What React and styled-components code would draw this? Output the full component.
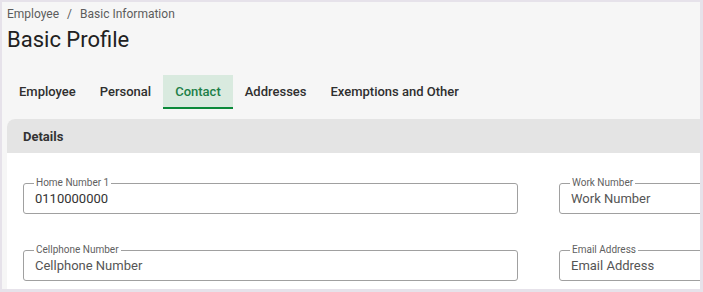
import React, { useState } from "react";
import styled, { createGlobalStyle } from "styled-components";

const GlobalStyle = createGlobalStyle`
  html, body {
    margin: 0;
    padding: 0;
    background: #e6e2ea;
    font-family: Roboto, "Liberation Sans", Arial, sans-serif;
  }
  * {
    box-sizing: border-box;
  }
`;

const TABS = ["Employee", "Personal", "Contact", "Addresses", "Exemptions and Other"];

const FIELDS = [
  { label: "Home Number 1", value: "0110000000" },
  { label: "Work Number", value: "" },
  { label: "Cellphone Number", value: "" },
  { label: "Email Address", value: "" },
];

function Field(props) {
  return (
    <FieldBox>
      <FieldLabel>{props.label}</FieldLabel>
      <FieldInput
        type="text"
        readOnly
        value={props.value}
        placeholder={props.label}
      />
    </FieldBox>
  );
}

function App() {
  const [active, setActive] = useState("Contact");
  return (
    <>
      <GlobalStyle />
      <Frame>
        <Page>
          <Breadcrumb>
            <span>Employee</span>
            <Slash>/</Slash>
            <span>Basic Information</span>
          </Breadcrumb>
          <Title>Basic Profile</Title>
          <TabBar>
            {TABS.map((t) => (
              <Tab key={t} $active={t === active} onClick={() => setActive(t)}>
                {t}
              </Tab>
            ))}
          </TabBar>
          <Card>
            <CardHeader>Details</CardHeader>
            <CardBody>
              {FIELDS.map((f) => (
                <Field key={f.label} label={f.label} value={f.value} />
              ))}
            </CardBody>
          </Card>
        </Page>
      </Frame>
    </>
  );
}

const Frame = styled.div`
  height: 292px;
  border-style: solid;
  border-color: #e6e2ea;
  border-width: 2px 3px 3px 2px;
  background: #f6f6f6;
  overflow: hidden;
`;

const Page = styled.div`
  padding: 4px 0 0 5px;
`;

const Breadcrumb = styled.div`
  display: flex;
  align-items: center;
  font-size: 12px;
  line-height: 16px;
  color: #5c5c5c;
`;

const Slash = styled.span`
  margin: 0 8px;
`;

const Title = styled.h1`
  margin: 5px 0 0;
  font-size: 22px;
  line-height: 26px;
  font-weight: 400;
  color: #212121;
`;

const TabBar = styled.div`
  display: flex;
  margin-top: 22px;
  height: 34px;
`;

const Tab = styled.div`
  display: flex;
  align-items: center;
  padding: 1px 12px 0;
  font-size: 13px;
  font-weight: 500;
  cursor: pointer;
  white-space: nowrap;
  color: ${(p) => (p.$active ? "#1d7f48" : "#2f2f2f")};
  background: ${(p) => (p.$active ? "#d9eadf" : "transparent")};
  border-bottom: 2px solid ${(p) => (p.$active ? "#0b8a3a" : "transparent")};
`;

const Card = styled.div`
  margin: 10px 0 0 0;
  width: 1100px;
  border-radius: 8px 0 0 0;
  overflow: hidden;
  background: #ffffff;
`;

const CardHeader = styled.div`
  display: flex;
  align-items: center;
  height: 34px;
  padding: 0 16px;
  background: #e4e4e4;
  font-size: 13px;
  font-weight: 700;
  color: #333333;
`;

const CardBody = styled.div`
  display: grid;
  grid-template-columns: 495px 495px;
  column-gap: 41px;
  row-gap: 31px;
  padding: 25px 16px 20px;
`;

const FieldBox = styled.fieldset`
  margin: 0;
  min-width: 0;
  padding: 3px 10px 6px;
  border: 1px solid #a0a0a0;
  border-radius: 3px;
`;

const FieldLabel = styled.legend`
  padding: 0 2px;
  margin-left: 0;
  font-size: 10px;
  line-height: 10px;
  color: #5f5f5f;
`;

const FieldInput = styled.input`
  display: block;
  width: 100%;
  padding: 0 1px;
  border: none;
  outline: none;
  background: transparent;
  font-family: Roboto, "Liberation Sans", Arial, sans-serif;
  font-size: 13px;
  line-height: 16px;
  height: 16px;
  color: #333333;
  &::placeholder {
    color: #555555;
    opacity: 1;
  }
`;

export default App;
